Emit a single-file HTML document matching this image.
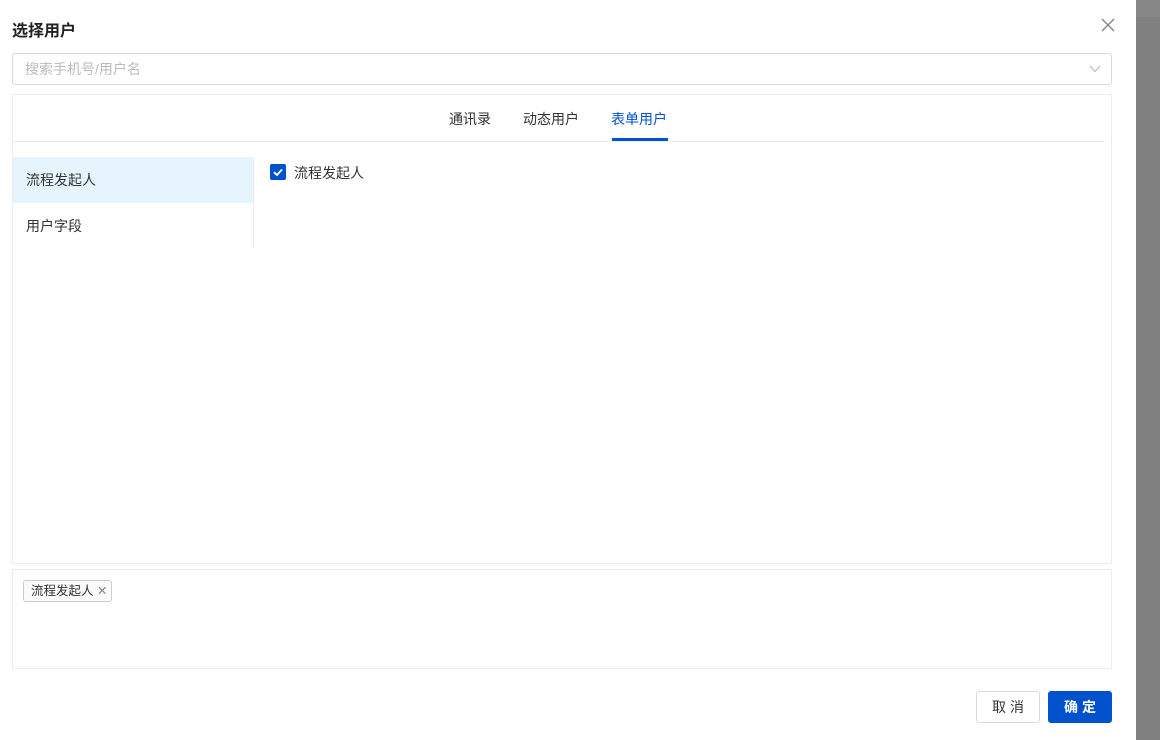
<!DOCTYPE html>
<html><head><meta charset="utf-8"><style>
*{box-sizing:border-box;margin:0;padding:0}
body{width:1160px;height:740px;overflow:hidden;background:#fff;font-family:"Liberation Sans","Noto Sans CJK SC",sans-serif;font-size:14px;color:#333;position:relative}
.ov{position:absolute;left:1136px;top:0;width:24px;height:740px;background:#808080}
.ov2{position:absolute;left:1136px;top:0;width:24px;height:17px;background:#878787}
.t{position:absolute;left:12px;top:17px;font-size:16px;font-weight:bold;color:#222}
.x{position:absolute;left:1100px;top:17px}
.search{position:absolute;left:12px;top:53px;width:1100px;height:32px;border:1px solid #d9d9d9;border-radius:3px;padding-left:12px;line-height:30px;color:#bbb}
.panel{position:absolute;left:12px;top:94px;width:1100px;height:470px;border:1px solid #ececec}
.tabs{position:absolute;left:0;top:0;width:1092px;height:47px;border-bottom:1px solid #ececec}
.tab{position:absolute;top:14px;font-size:14px;color:#333}
.on{color:#0052cc}
.bar{position:absolute;left:599px;top:43px;width:56px;height:3px;background:#0052cc}
.side{position:absolute;left:0;top:62px;width:241px;height:91px;border-right:1px solid #ececec}
.it{height:46px;line-height:46px;padding-left:13px}
.sel{background:#e6f5fd}
.cb{position:absolute;left:257px;top:69px;width:16px;height:16px;background:#0052cc;border-radius:2px}
.cbl{position:absolute;left:281px;top:68px}
.bot{position:absolute;left:12px;top:569px;width:1100px;height:100px;border:1px solid #ececec}
.tag{position:absolute;left:10px;top:10px;width:89px;height:22px;border:1px solid #ccc;border-radius:3px;background:#fafafa;padding:0 7px;font-size:12.5px;line-height:20px;color:#333;white-space:nowrap}
.btn{position:absolute;top:691px;height:32px;border-radius:3px;line-height:30px;text-align:center;font-size:14px;letter-spacing:4px;padding-left:4px}
</style></head><body>
<div class="ov"></div><div class="ov2"></div>
<div class="t">选择用户</div>
<svg class="x" width="16" height="16" viewBox="0 0 16 16"><path d="M2 2L14 14M14 2L2 14" stroke="#888" stroke-width="1.5"/></svg>
<div class="search">搜索手机号/用户名
<svg style="position:absolute;right:10px;top:11px" width="12" height="8" viewBox="0 0 12 8"><path d="M1 1L6 6.5L11 1" stroke="#bbb" fill="none" stroke-width="1.2"/></svg></div>
<div class="panel">
<div class="tabs">
<span class="tab" style="left:436px">通讯录</span>
<span class="tab" style="left:510px">动态用户</span>
<span class="tab on" style="left:598px">表单用户</span>
<div class="bar"></div></div>
<div class="side"><div class="it sel">流程发起人</div><div class="it">用户字段</div></div>
<div class="cb"><svg width="16" height="16" viewBox="0 0 16 16"><path d="M4 8.2L7 11L12 5.5" stroke="#fff" stroke-width="2" fill="none"/></svg></div>
<div class="cbl">流程发起人</div>
</div>
<div class="bot"><div class="tag">流程发起人 <span style="color:#888">✕</span></div></div>
<div class="btn" style="left:976px;width:64px;border:1px solid #d9d9d9;color:#333">取消</div>
<div class="btn" style="left:1048px;width:64px;background:#0052cc;color:#fff;border:1px solid #0052cc;font-weight:bold">确定</div>
</body></html>
